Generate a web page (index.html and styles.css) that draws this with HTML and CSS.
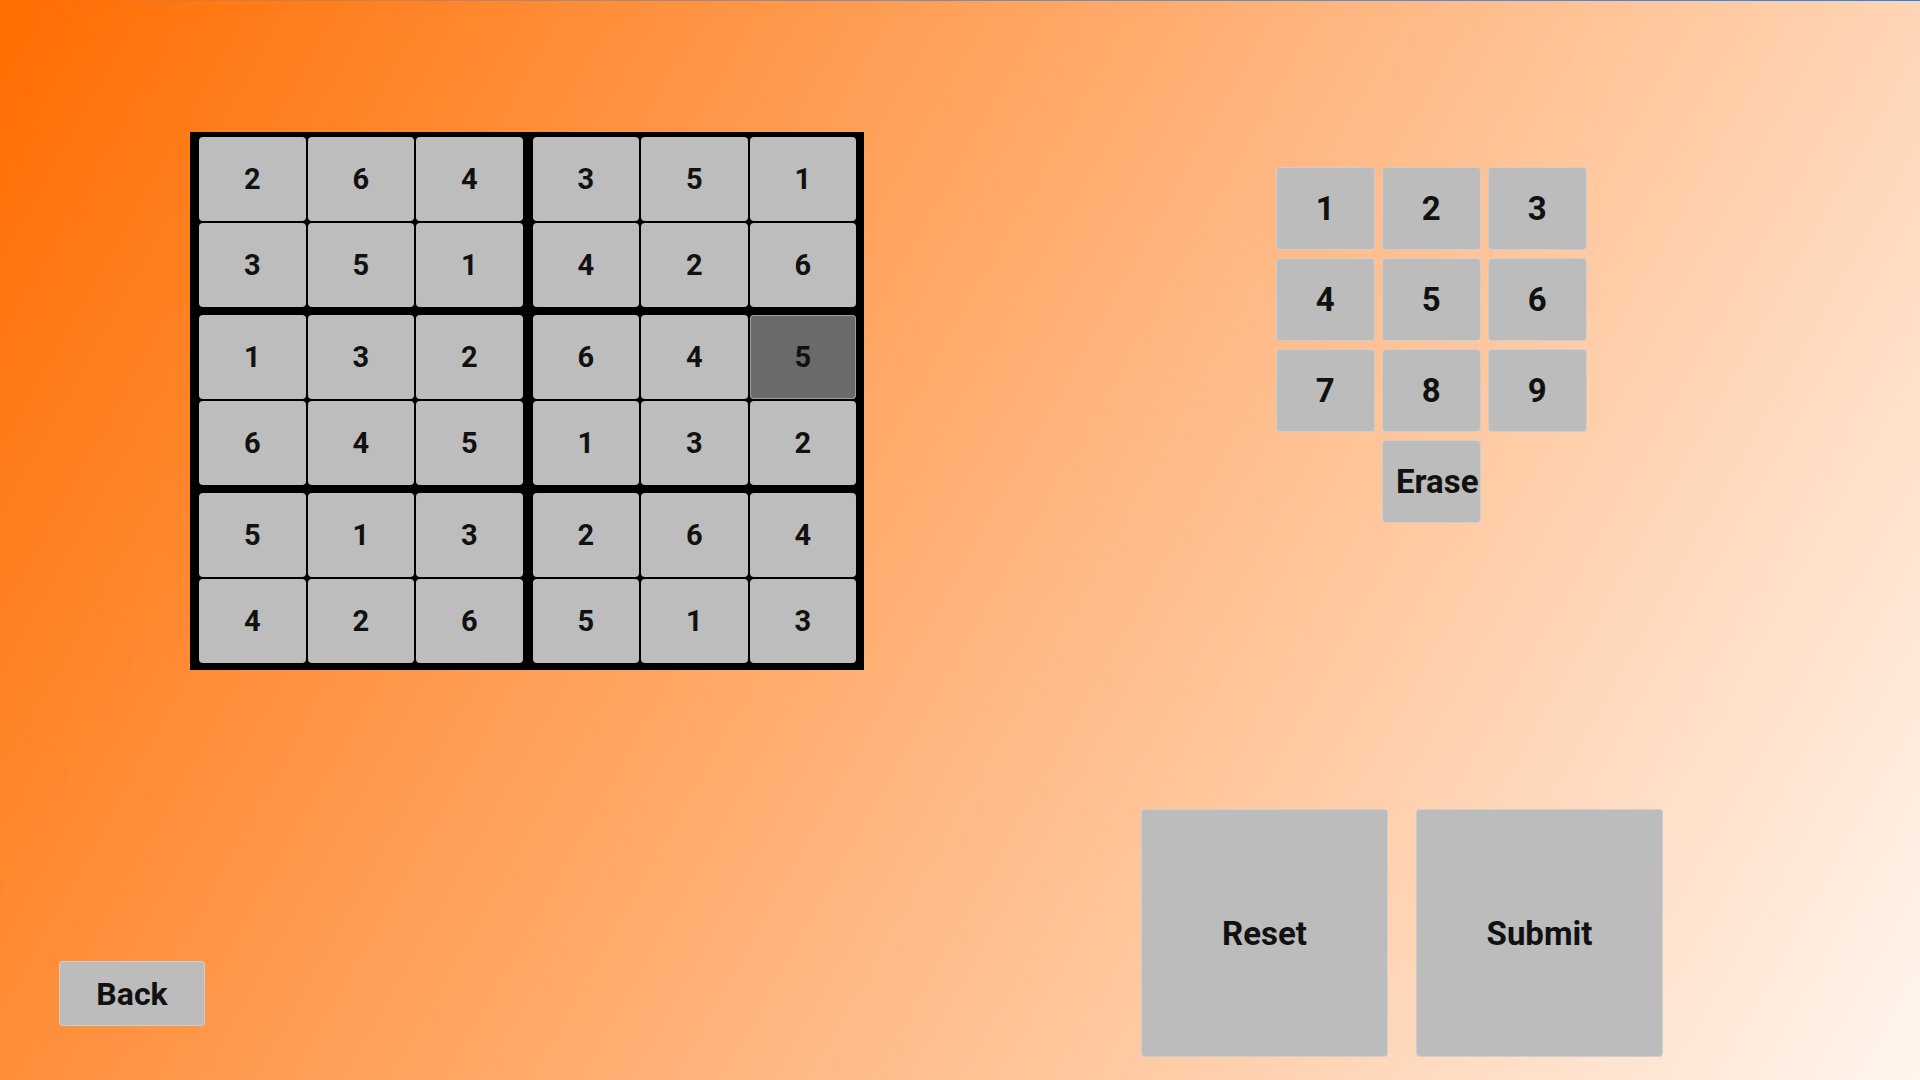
FILE: index.html
```html
<!DOCTYPE html>
<html lang="en">
<head>
<meta charset="utf-8">
<title>Sudoku 6x6</title>
<link rel="stylesheet" href="styles.css">
</head>
<body>
<div class="screen">
  <div class="topline"></div>
  <main class="layout">
    <section class="left-col">
      <div class="board">
        <div class="block">
          <div class="cell">2</div><div class="cell">6</div><div class="cell">4</div>
          <div class="cell">3</div><div class="cell">5</div><div class="cell">1</div>
        </div>
        <div class="block">
          <div class="cell">3</div><div class="cell">5</div><div class="cell">1</div>
          <div class="cell">4</div><div class="cell">2</div><div class="cell">6</div>
        </div>
        <div class="block">
          <div class="cell">1</div><div class="cell">3</div><div class="cell">2</div>
          <div class="cell">6</div><div class="cell">4</div><div class="cell">5</div>
        </div>
        <div class="block">
          <div class="cell">6</div><div class="cell">4</div><div class="cell cell-selected">5</div>
          <div class="cell">1</div><div class="cell">3</div><div class="cell">2</div>
        </div>
        <div class="block">
          <div class="cell">5</div><div class="cell">1</div><div class="cell">3</div>
          <div class="cell">4</div><div class="cell">2</div><div class="cell">6</div>
        </div>
        <div class="block">
          <div class="cell">2</div><div class="cell">6</div><div class="cell">4</div>
          <div class="cell">5</div><div class="cell">1</div><div class="cell">3</div>
        </div>
      </div>
      <button class="btn back-btn">Back</button>
    </section>
    <section class="right-col">
      <div class="keypad">
        <button class="btn key">1</button>
        <button class="btn key">2</button>
        <button class="btn key">3</button>
        <button class="btn key">4</button>
        <button class="btn key">5</button>
        <button class="btn key">6</button>
        <button class="btn key">7</button>
        <button class="btn key">8</button>
        <button class="btn key">9</button>
        <button class="btn key key-erase">Erase</button>
      </div>
      <div class="actions">
        <button class="btn action-btn">Reset</button>
        <button class="btn action-btn">Submit</button>
      </div>
    </section>
  </main>
</div>
</body>
</html>
```

FILE: styles.css
```css
html, body {
  margin: 0;
  padding: 0;
}

body {
  width: 1920px;
  height: 1080px;
  overflow: hidden;
  font-family: Roboto, "Liberation Sans", sans-serif;
}

.screen {
  width: 1920px;
  height: 1080px;
  background: linear-gradient(119.36deg, #ff6d00 0%, #fff5ee 100%);
  display: flex;
  flex-direction: column;
}

.topline {
  height: 1px;
  flex: none;
  background: linear-gradient(to right, rgba(30, 120, 225, 0) 0%, rgba(30, 120, 225, 0.55) 50%, #2a86e4 100%);
}

.layout {
  flex: 1;
  display: grid;
  grid-template-columns: 1081px 1fr;
}

.left-col {
  display: flex;
  flex-direction: column;
  align-items: flex-start;
  padding: 131px 0 0 59px;
}

.board {
  margin-left: 131px;
  background: #000;
  padding: 5px 8px 7px 9px;
  display: grid;
  grid-template-columns: repeat(2, 323.5px);
  grid-auto-rows: 170px;
  column-gap: 10px;
  row-gap: 8px;
}

.block {
  display: grid;
  grid-template-columns: repeat(3, 106.5px);
  grid-template-rows: repeat(2, 84px);
  gap: 2px;
}

.cell {
  background: #bdbdbd;
  border-radius: 4px;
  display: flex;
  align-items: center;
  justify-content: center;
  font-size: 29px;
  font-weight: 700;
  color: #111;
}

.cell-selected {
  background: #6a6a6a;
  box-shadow: inset 0 0 0 1px #9c9c9c;
}

.btn {
  font-family: Roboto, "Liberation Sans", sans-serif;
  font-weight: 700;
  color: #111;
  background: #bcbcbc;
  border: 1px solid rgba(255, 255, 255, 0.28);
  border-radius: 4px;
  padding: 0;
  display: flex;
  align-items: center;
  justify-content: center;
  white-space: nowrap;
  cursor: pointer;
}

.back-btn {
  margin-top: 291px;
  width: 146px;
  height: 65px;
  font-size: 32px;
}

.right-col {
  display: flex;
  flex-direction: column;
  align-items: flex-start;
  padding: 166px 0 0 60px;
}

.keypad {
  margin-left: 135px;
  display: grid;
  grid-template-columns: repeat(3, 98.5px);
  grid-auto-rows: 83px;
  column-gap: 7.5px;
  row-gap: 8px;
}

.key {
  font-size: 33px;
}

.key-erase {
  grid-column: 2;
  padding-left: 12px;
}

.actions {
  margin-top: 286px;
  display: flex;
  gap: 28px;
}

.action-btn {
  flex: none;
  width: 247px;
  height: 248px;
  font-size: 33px;
}
```
